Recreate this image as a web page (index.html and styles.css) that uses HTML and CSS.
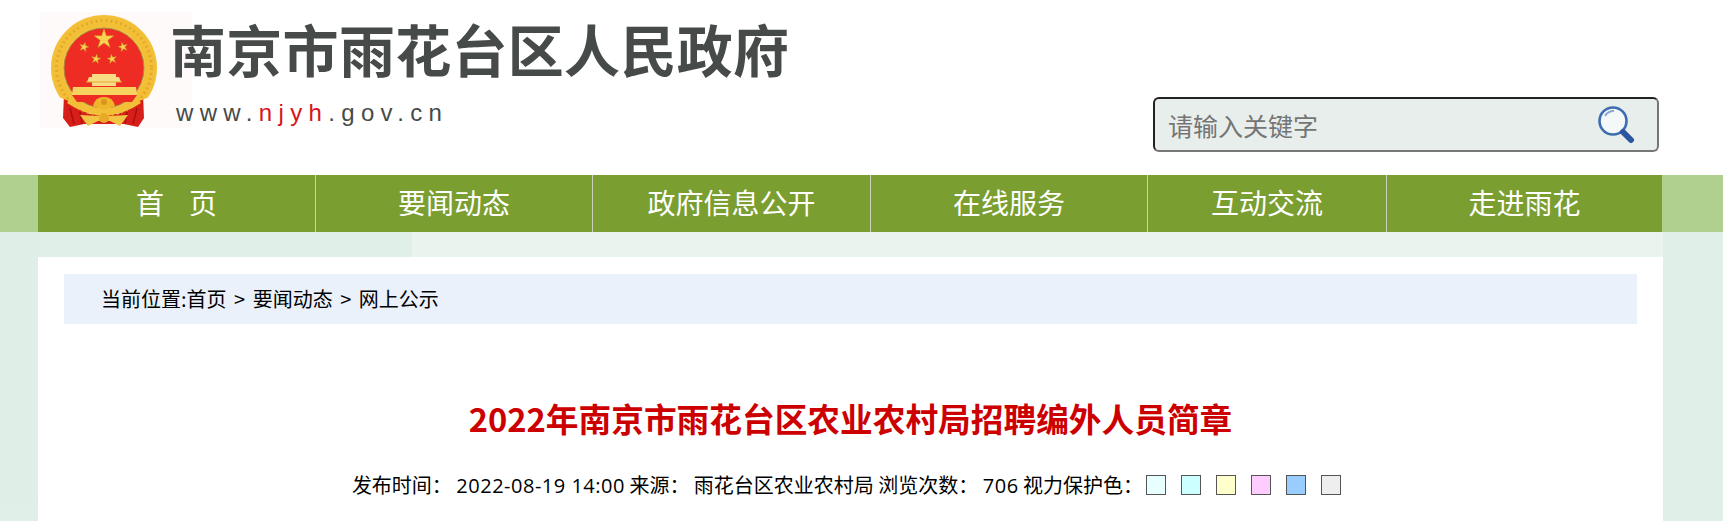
FILE: index.html
```html
<!DOCTYPE html>
<html lang="zh-CN">
<head>
  <meta charset="UTF-8" />
  <title>2022年南京市雨花台区农业农村局招聘编外人员简章</title>
  <link rel="stylesheet" href="styles.css">
</head>
<body>
  <!-- 页头 -->
  <div class="header">
    <div class="logo">
      <svg class="emblem" viewBox="0 0 152 116" aria-hidden="true">
        <defs>
          <polygon id="s" points="0,-5 1.12,-1.54 4.76,-1.55 1.81,.59 2.94,4.05 0,1.9 -2.94,4.05 -1.81,.59 -4.76,-1.55 -1.12,-1.54"/>
        </defs>
        <rect width="152" height="116" fill="#fffafa"/>
        <!-- 绶带 -->
        <path d="M24 82 L30 92 L50 102 L78 102 L98 92 L103 82 L104 106 L98 115 L84 112 L44 112 L30 115 L23 106Z" fill="#d81e1a"/>
        <path d="M30 96 L34 112 M40 100 L42 112 M97 96 L93 112 M87 100 L85 112" stroke="#a8120f" stroke-width="1.5"/>
        <!-- 麦穗环 -->
        <path d="M20 85.5 A53 53 0 1 1 108 85.5 L92 92 A42 42 0 0 1 36 92Z" fill="#f2bf36"/>
        <circle cx="64" cy="56" r="47.5" fill="none" stroke="#dd9f26" stroke-width="3" stroke-dasharray="2 3" opacity=".7"/>
        <circle cx="64" cy="56" r="41" fill="#f7d468" opacity=".6"/>
        <circle cx="64" cy="56" r="40" fill="#ee2c24" stroke="#a98a3a" stroke-width="1"/>
        <g fill="#f7d350" stroke="#c98e22" stroke-width=".4">
          <polygon points="64,16.5 66.35,23.76 74,23.8 67.8,28.24 70.2,35.5 64,31 57.8,35.5 60.2,28.24 54,23.8 61.65,23.76"/>
          <use href="#s" transform="translate(44,35) rotate(15)"/>
          <use href="#s" transform="translate(83,35) rotate(-15)"/>
          <use href="#s" transform="translate(56,47) rotate(10)"/>
          <use href="#s" transform="translate(72,47) rotate(-10)"/>
        </g>
        <!-- 天安门 -->
        <path d="M52 62 H76 V65 H79 L81 70 H76 V74 H52 V70 H47 L49 65 H52Z" fill="#f8dc84"/>
        <path d="M46 70 H82" stroke="#e0a93a" stroke-width="1"/>
        <path d="M33 75 H96 L97 83 H32Z" fill="#f6d25e"/>
        <path d="M32 83 H97 L92 90 H37Z" fill="#ee2c24"/>
        <!-- 底部 -->
        <path d="M30 87 Q64 108 98 87 L101 91 Q64 116 27 91Z" fill="#f2bf36"/>
        <path d="M53 94 Q55 85 64 85 Q73 85 75 94 Q64 100 53 94Z" fill="#efb62c"/>
        <circle cx="64" cy="90" r="3" fill="#d8951e"/>
        <path d="M40 103 L58 104 L64 100 L70 104 L88 103 L80 114 L70 109 L58 109 L48 114Z" fill="#f2c443"/>
        <circle cx="64" cy="106" r="5" fill="#e8a926"/>
      </svg>
      <div class="logo-text">
        <div class="site-name">南京市雨花台区人民政府</div>
        <div class="site-url">www.<span class="red">njyh</span>.gov.cn</div>
      </div>
    </div>
    <div class="search">
      <input class="search-input" type="text" placeholder="请输入关键字">
      <svg class="search-icon" viewBox="0 0 38 40" aria-hidden="true">
        <circle cx="16" cy="16" r="13.5" fill="#f4f8f8" stroke="#3d6cb0" stroke-width="2.6"/>
        <path d="M8 11 A10 10 0 0 1 17 6" fill="none" stroke="#8aa8d4" stroke-width="2"/>
        <path d="M26 27 L34 35" stroke="#2c57a0" stroke-width="6" stroke-linecap="round"/>
      </svg>
    </div>
  </div>

  <!-- 导航 -->
  <div class="nav-band">
    <ul class="nav">
      <li>首&nbsp;&nbsp;&nbsp;&nbsp;页</li>
      <li>要闻动态</li>
      <li class="wide">政府信息公开</li>
      <li>在线服务</li>
      <li class="short">互动交流</li>
      <li class="last">走进雨花</li>
    </ul>
  </div>

  <div class="page">
    <div class="panel">
      <div class="crumb">当前位置:首页<span class="sep">&gt;</span>要闻动态<span class="sep">&gt;</span>网上公示</div>
      <h1 class="title">2022年南京市雨花台区农业农村局招聘编外人员简章</h1>
      <div class="meta">
        <span>发布时间： <span class="num">2022-08-19 14:00</span> 来源：&nbsp;雨花台区农业农村局 浏览次数：&nbsp;<span class="num">706</span> 视力保护色：</span>
        <i class="swatch first c1"></i>
        <i class="swatch c2"></i>
        <i class="swatch c3"></i>
        <i class="swatch c4"></i>
        <i class="swatch c5"></i>
        <i class="swatch c6"></i>
      </div>
    </div>
  </div>
</body>
</html>
```

FILE: styles.css
```css
html {
  overflow: hidden;
}
body {
  margin: 0;
  font-family: "Noto Sans CJK SC", "Liberation Sans", sans-serif;
  background: #fff;
  color: #000;
}

/* 页头 */
.header {
  height: 175px;
  padding: 0 64px 0 40px;
  box-sizing: border-box;
  display: flex;
  justify-content: space-between;
}
.logo {
  display: flex;
  padding-top: 12px;
}
.emblem {
  width: 152px;
  height: 116px;
  display: block;
}
.logo-text {
  margin-left: -19px;
  position: relative;
  left: -3px;
}
.site-name {
  font-size: 56px;
  font-weight: 700;
  line-height: 64px;
  letter-spacing: .3px;
  color: #464a49;
  margin-top: 4px;
}
.site-url {
  font-family: "Liberation Sans", sans-serif;
  font-size: 24px;
  line-height: 28px;
  letter-spacing: 6.35px;
  color: #464a49;
  margin: 19px 0 0 6px;
}
.red {
  color: #d8141c;
}
.search {
  width: 506px;
  height: 55px;
  margin-top: 97px;
  box-sizing: border-box;
  background: #e8eeeb;
  border: 2px solid;
  border-color: #222 #767676 #767676 #222;
  border-radius: 6px;
  display: flex;
  align-items: center;
  padding: 0 22px 0 13px;
}
.search-input {
  flex: 1;
  border: none;
  background: none;
  outline: none;
  font-family: inherit;
  font-size: 25px;
  padding: 0;
}
.search-input::placeholder {
  color: #757575;
}
.search-icon {
  width: 38px;
  height: 40px;
}

/* 导航 */
.nav-band {
  height: 57px;
  background: #b0d090;
  padding: 0 61px 0 38px;
}
.nav {
  list-style: none;
  margin: 0;
  padding: 0;
  height: 57px;
  background: #7a9e30;
  display: flex;
}
.nav li {
  width: 277px;
  box-sizing: border-box;
  border-left: 1px solid #c9d0bd;
  color: #fff;
  font-size: 28px;
  line-height: 55px;
  text-align: center;
}
.nav li:first-child {
  border-left: none;
}
.nav li.wide {
  width: 278px;
}
.nav li.short {
  width: 239px;
}
.nav li.last {
  width: 276px;
}

/* 正文 */
.page {
  padding: 25px 60px 0 38px;
  background:
    linear-gradient(#e9f4ef, #e9f4ef) 412px 0 / 1251px 25px no-repeat,
    linear-gradient(#dfefe8 60%, #e8f2ec) 0 0 / 38px 100% no-repeat,
    #e0efe8;
  min-height: 289px;
}
.panel {
  background: #fff;
  padding: 17px 26px 0;
  height: 400px;
}
.crumb {
  background: #eaf1fa;
  height: 50px;
  line-height: 50px;
  padding-left: 37px;
  font-size: 20px;
}
.sep {
  margin: 0 7.5px;
}
.title {
  margin: 71px 0 0;
  text-align: center;
  font-size: 32.7px;
  line-height: 46px;
  font-weight: 700;
  color: #cc0000;
}
.meta {
  margin-top: 29px;
  padding-right: 8px;
  display: flex;
  justify-content: center;
  align-items: center;
  font-size: 20px;
  line-height: 30px;
  white-space: pre;
}
.num {
  font-family: "Open Sans", sans-serif;
  letter-spacing: .5px;
}
.swatch {
  width: 20px;
  height: 20px;
  box-sizing: border-box;
  border: 1px solid #555;
  margin-left: 15px;
  position: relative;
  top: -1px;
}
.swatch.first {
  margin-left: 3px;
}
.c1 { background: #e8ffff; }
.c2 { background: #ccffff; }
.c3 { background: #ffffcc; }
.c4 { background: #ffccff; }
.c5 { background: #99ccff; }
.c6 { background: #eeeeee; }
```
